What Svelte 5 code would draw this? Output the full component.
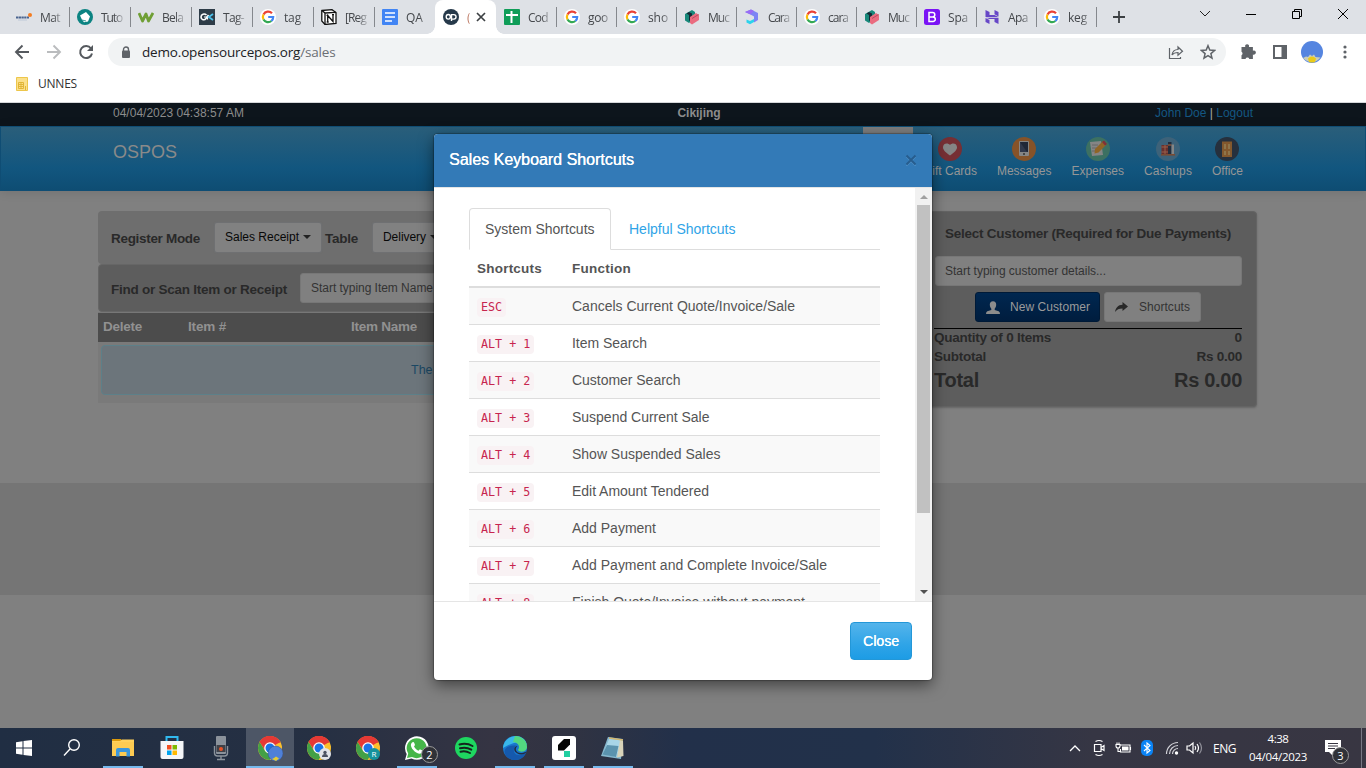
<script>
  const tabs = [
    ['elo', 'Mat'], ['teal', 'Tuto'], ['w', 'Bela'], ['ok', 'Tag-'], ['g', 'tag'], ['notion', '[Reg'], ['doc', 'QA'],
    ['ospos', '('], ['sheet', 'Cod'], ['g', 'goo'], ['g', 'sho'], ['mud', 'Muc'], ['arrow', 'Cara'], ['g', 'cara'],
    ['mud', 'Muc'], ['boot', 'Spa'], ['h', 'Apa'], ['g', 'keg']
  ];
  const labelWidths = [20, 21, 21, 21, 17, 21, 17, 3, 20, 20, 20, 21, 21, 20, 21, 20, 20, 19];
  const nav = [['heart', 'Gift Cards', 54], ['phone', 'Messages', 54.500], ['note', 'Expenses', 52.500], ['books', 'Cashups', 48], ['door', 'Office', 31]];
  const rows = [
    ['ESC', 'Cancels Current Quote/Invoice/Sale', 223],
    ['ALT + 1', 'Item Search', 75],
    ['ALT + 2', 'Customer Search', 108.5],
    ['ALT + 3', 'Suspend Current Sale', 137.5],
    ['ALT + 4', 'Show Suspended Sales', 148.5],
    ['ALT + 5', 'Edit Amount Tendered', 137],
    ['ALT + 6', 'Add Payment', 84],
    ['ALT + 7', 'Add Payment and Complete Invoice/Sale', 255],
    ['ALT + 8', 'Finish Quote/Invoice without payment', 233]
  ];
  const tasks = [
    ['win', ''], ['search', ''], ['folder', 'open'], ['store', ''], ['mic', ''], ['chrome1', 'open active'],
    ['chrome2', ''], ['chrome3', ''], ['whatsapp', 'open'], ['spotify', ''], ['edge', 'open'], ['kapp', 'open'], ['notepad', 'open']
  ];

  // Spreads letters so that a label occupies the given width.
  function fit(node, width) {
    const natural = node.getBoundingClientRect().width;
    const n = node.textContent.length;
    if (width && n) node.style.letterSpacing = (width - natural) / n + 'px';
  }
</script>

{#snippet chromeBall()}
  <circle cx="12" cy="12" r="12" fill="#fbc02d" />
  <path d="M12 12 1.6 6A12 12 0 0 1 22.4 6Z" fill="#e53935" />
  <path d="M12 6.4H22.6A12 12 0 0 0 1.6 6l5.5 8.6Z" fill="#e53935" />
  <path d="M1.6 6A12 12 0 0 0 11.6 24l5.2-9L12 17.4 7.2 15Z" fill="#43a047" />
  <circle cx="12" cy="12" r="5.8" fill="#fff" />
  <circle cx="12" cy="12" r="4.5" fill="#1a73e8" />
{/snippet}

{#snippet fav(kind)}
  <svg class="fav" width="16" height="16" viewBox="0 0 16 16">
    {#if kind === 'elo'}
      <path d="M0 8.500h2.600M3 8.500h2.600M6 8.500h1.800M8.200 8.500h1.800M10.500 8.500h2.500" stroke="#4a648f" stroke-width="2.200" />
      <path d="M2 11h9" stroke="#b8c3d6" stroke-width=".8" /><circle cx="14" cy="6" r="2" fill="#f47b20" />
    {:else if kind === 'teal'}
      <circle cx="8" cy="8" r="8" fill="#0b8382" /><path d="M3 6.500 9 3l4 4.500-2 5-4 .8-2-2.500Z" fill="#fff" /><path d="m5 11 4 1" stroke="#0b8382" stroke-width=".8" />
    {:else if kind === 'w'}
      <path d="m1 4 3.500 8L8 5l2.500 7L15 4" fill="none" stroke="#6f9f35" stroke-width="2.800" stroke-linejoin="round" />
    {:else if kind === 'ok'}
      <rect width="16" height="16" fill="#2e3c48" /><path d="M7.500 6C5.500 4.200 2 5 2 8s3.500 3.700 5 1.500L9.500 6" fill="none" stroke="#fff" stroke-width="1.600" /><path d="M5 8h3.500v2.500" fill="none" stroke="#fff" stroke-width="1.200" /><path d="M14 5 9.800 8l4.200 3" fill="none" stroke="#4cc0ea" stroke-width="1.800" />
    {:else if kind === 'g'}
      <circle cx="8" cy="8" r="8" fill="#fff" />
      <path d="M12 4.300A5.200 5.200 0 0 0 3.500 5.500" fill="none" stroke="#ea4335" stroke-width="2.200" />
      <path d="M3.500 5.500a5.300 5.300 0 0 0 0 5" fill="none" stroke="#fbbc05" stroke-width="2.200" />
      <path d="M3.500 10.500a5.200 5.200 0 0 0 7.900 1.500" fill="none" stroke="#34a853" stroke-width="2.200" />
      <path d="M8.200 8h5a5.300 5.300 0 0 1-1.800 4" fill="none" stroke="#4285f4" stroke-width="2.200" />
    {:else if kind === 'notion'}
      <path d="M.8 1.500 11 .7l4 2.800v11L4 15.500.8 12Z" fill="#fff" stroke="#111" stroke-width="1.300" /><path d="M1 1.500 4 4l11-.7M4 4v11.500" fill="none" stroke="#111" stroke-width="1.300" /><path d="M6.700 13V6.500L12 12.500V5.500M5.500 6.300h2M5.700 13h2M11 5.700h2" fill="none" stroke="#111" stroke-width="1.300" />
    {:else if kind === 'doc'}
      <rect width="16" height="16" rx="1" fill="#4285f4" /><path d="M3 4h10M3 8h10M3 12h7" stroke="#fff" stroke-width="1.700" />
    {:else if kind === 'ospos'}
      <circle cx="8" cy="8" r="8" fill="#26394a" /><ellipse cx="5.300" cy="7.800" rx="2.100" ry="2.300" fill="none" stroke="#fff" stroke-width="1.400" /><path d="M8.500 12V5.600h2.300a2.200 2.200 0 0 1 0 4.500H8.500" fill="none" stroke="#fff" stroke-width="1.400" />
    {:else if kind === 'sheet'}
      <rect width="16" height="16" rx="1" fill="#0f9d58" /><path d="M2 6h12M7.500 2v12" stroke="#fff" stroke-width="2" />
    {:else if kind === 'mud'}
      <path d="m1 5 7-4 3 2v6l-6 5-4-2.500Z" fill="#18897b" /><path d="m5 3 3 1.500V10l-3 2V6L2.500 4.500Z" fill="#172a35" /><path d="m6 8 6-4 3 2v5l-7 4.500L6 14Z" fill="#ea6c80" /><path d="m8 9.500 6.500-4" stroke="#b84a5d" />
    {:else if kind === 'arrow'}
      <path d="m1 3 6-2.500 7 3.500v7l-4 2.500V7.500L6.500 5.500Z" fill="#7d84f4" /><path d="m1 3 6-2.500 3 1.500-3.500 3.500Z" fill="#9a6cf5" /><path d="M2.500 10.500 6 12l4-2v3l-4 2.200-3.500-1.800Z" fill="#2cd2ec" />
    {:else if kind === 'boot'}
      <rect width="16" height="16" rx="2.500" fill="#7a13f5" /><path d="M5 3.500v9h4a2.300 2.300 0 0 0 0-4.600H5h3.600a2.200 2.200 0 0 0 0-4.400Z" fill="none" stroke="#fff" stroke-width="1.500" />
    {:else if kind === 'h'}
      <path d="m1.500 1 4 2v3h5L14.500 8h-13ZM14.500 15l-4-2v-3h-5L2 8.700h12.500Z" fill="#6747c7" /><path d="m10.500 1 4 2v4.500l-4-2.200ZM1.500 9l4 2v4l-4-2Z" fill="#6747c7" />
    {/if}
  </svg>
{/snippet}

<div class="screen">
  <header class="browser">
    <div class="tabs">
      {#each tabs as [kind, label], i}
        <div class="tab" class:early={i < 7} class:active={i === 7} class:nosep={i === 6}>
          {@render fav(kind)}
          <span class="tl"><span use:fit={labelWidths[i]}>{label}</span></span>
          {#if i === 7}
            <svg class="x" width="10" height="10" viewBox="0 0 10 10"><path d="m1 1 8 8M9 1 1 9" stroke="#3c4043" stroke-width="1.700" /></svg>
          {/if}
        </div>
      {/each}
      <svg class="plus" width="12" height="12" viewBox="0 0 12 12"><path d="M6 0v12M0 6h12" stroke="#3c4043" stroke-width="1.800" /></svg>
      <div class="winctl">
        <svg width="12" height="12" viewBox="0 0 12 12"><path d="m1 3 5 5 5-5" fill="none" stroke="#222" /></svg>
        <svg width="12" height="12" viewBox="0 0 12 12"><path d="M1 6.500h10" stroke="#000" /></svg>
        <svg width="12" height="12" viewBox="0 0 12 12"><path d="M1.500 3.500h7v7h-7ZM3.500 3.500v-2h7v7h-2" fill="none" stroke="#000" /></svg>
        <svg width="12" height="12" viewBox="0 0 12 12"><path d="m1 1 10 10M11 1 1 11" stroke="#000" /></svg>
      </div>
    </div>
    <div class="toolbar">
      <svg width="16" height="16" viewBox="0 0 16 16"><path d="M15 8H2M8.500 1.500 2 8l6.500 6.500" fill="none" stroke="#55595e" stroke-width="1.900" /></svg>
      <svg width="16" height="16" viewBox="0 0 16 16"><path d="M1 8h13M7.500 1.500 14 8l-6.500 6.500" fill="none" stroke="#babcbe" stroke-width="1.900" /></svg>
      <svg width="16" height="16" viewBox="0 0 16 16"><path d="M13 4.500A6 6 0 1 0 14 9.500" fill="none" stroke="#55595e" stroke-width="2" /><path d="M15 1v6H9Z" fill="#55595e" /></svg>
      <div class="omni">
        <svg width="10" height="13" viewBox="0 0 10 13"><path d="M2.500 6V3.500a2.500 2.500 0 0 1 5 0V6" fill="none" stroke="#5f6368" stroke-width="1.400" /><rect x="1" y="4.500" width="8" height="7.500" rx="1" fill="#5f6368" /></svg>
        <span class="url"><span use:fit={193.500}>demo.opensourcepos.org<i>/sales</i></span></span>
        <svg class="share" width="16" height="16" viewBox="0 0 16 16"><path d="M1.500 4v10.500h11V13M4 11c.5-3.500 2.500-5.500 6-5.500V3l4.500 4.200-4.500 4V8.500C7.500 8.500 5.500 9 4 11Z" fill="none" stroke="#5f6368" stroke-width="1.200" /></svg>
        <svg width="16" height="16" viewBox="0 0 16 16"><path d="m8 1.700 1.800 4.400 4.700.4-3.600 3.100 1.100 4.600L8 11.700l-4 2.500 1.100-4.600L1.500 6.500l4.700-.4Z" fill="none" stroke="#5f6368" stroke-width="1.500" /></svg>
      </div>
      <svg class="puz" width="16" height="16" viewBox="0 0 16 16"><path d="M1.500 3h3.800a2 2 0 1 1 3.600 0h4v3.700a2.100 2.100 0 1 1 0 3.800V15H9.300a2 2 0 0 0-3.800 0h-4v-3.800a2 2 0 0 0 0-3.500Z" fill="#5f6368" /></svg>
      <svg class="side" width="14" height="14" viewBox="0 0 14 14"><path d="M1 1h12v12H1Z" fill="none" stroke="#5f6368" stroke-width="2" /><path d="M8.500 1H13v12H8.500Z" fill="#5f6368" /></svg>
      <svg class="avatar" width="22" height="22" viewBox="0 0 22 22"><circle cx="11" cy="11" r="11" fill="#5585e0" /><path d="m2 17 3-1.500 2 .5 2-2.500 2 1.500 2-1.500 1.500 2.500 5 .5a11 11 0 0 1-17 1Z" fill="#c9cdb8" /><path d="M7 17.500q4-4 8 0l-1 3.500q-3 1-6 0Z" fill="#eacb19" /></svg>
      <svg class="dots" width="4" height="14" viewBox="0 0 4 14"><g fill="#5f6368"><circle cx="2" cy="2" r="1.600" /><circle cx="2" cy="7" r="1.600" /><circle cx="2" cy="12" r="1.600" /></g></svg>
    </div>
    <div class="bookmarks">
      <svg width="12" height="14" viewBox="0 0 12 14"><path d="M.5.5h11v13H.5Z" fill="#fbe08a" stroke="#edc64b" /><path d="M2.500 5.500h5v6h-5ZM5 5.500v6M2.500 7.500h5M2.500 9.500h5M9.500 9v4" fill="none" stroke="#dfb12f" stroke-width=".9" /></svg>
      <span use:fit={39}>UNNES</span>
    </div>
  </header>

  <main class="page">
    <div class="topbar">
      <span class="clock"><span use:fit={131}>04/04/2023 04:38:57 AM</span></span>
      <b><span use:fit={43}>Cikijing</span></b>
      <span class="user"><span use:fit={98}><a>John Doe</a> <em>|</em> <a>Logout</a></span></span>
    </div>
    <nav class="navbar">
      <span class="brand"><span use:fit={64}>OSPOS</span></span>
      <div class="items">
        <div class="current"></div>
        {#each nav as [kind, label, w]}
          <div class="item">
            <svg width="24" height="24" viewBox="0 0 24 24">
              {#if kind === 'heart'}
                <circle cx="12" cy="12" r="12" fill="#762f34" /><path d="M12 18.500C7 15 4.800 12.500 5 10c.3-4 5-4.500 7-2 2-2.500 6.700-2 7 2 .2 2.500-2 5-7 8.500Z" fill="#858585" />
              {:else if kind === 'phone'}
                <circle cx="12" cy="12" r="12" fill="#865329" /><rect x="7" y="4" width="10" height="15" rx="1" fill="#858585" /><path d="M8 5h8v10H8Z" fill="#202737" /><path d="m8 5 7 10H8Z" fill="#30384b" /><circle cx="12" cy="17" r="1" fill="#333" />
              {:else if kind === 'note'}
                <circle cx="12" cy="12" r="12" fill="#3c7062" /><path d="m4 5 11-1 2 14-11 1Z" fill="#858585" /><path d="M6 8h6M6 11h5M6 14h4" stroke="#666" /><path d="m9 12 8-8 3.500 3.500-8 8-4 1Z" fill="#906526" /><path d="m16 5 2-1.500L21 7l-2 1.500Z" fill="#813037" />
              {:else if kind === 'books'}
                <circle cx="12" cy="12" r="12" fill="#3d6279" /><path d="M5.500 8h7v9h-7Z" fill="#6a2f2c" /><path d="M9 8v9M5.500 10H12M5.500 15H12" stroke="#96604a" /><path d="M12 5h3.500v12H12Z" fill="#222d3d" /><path d="M12 8h3.500" stroke="#83533d" stroke-width="1.500" /><path d="M15.500 7.500H18V17h-2.500Z" fill="#858585" /><path d="M5 17.800h14" stroke="#7d4a30" stroke-width="1.500" />
              {:else}
                <circle cx="12" cy="12" r="12" fill="#26303d" /><path d="M7 4.500h10V20H7Z" fill="#83582d" /><path d="M9 7h2v5H9Zm4 0h2v5h-2ZM9 14h2v4H9Zm4 0h2v4h-2Z" fill="#8f754a" />
              {/if}
            </svg>
            <span><span use:fit={w}>{label}</span></span>
          </div>
        {/each}
      </div>
    </nav>

    <div class="container">
      <section class="register">
        <div class="mode">
          <b class="m1"><span use:fit={89}>Register Mode</span></b>
          <div class="sel s1"><span use:fit={74}>Sales Receipt</span><i></i></div>
          <b class="m2"><span use:fit={33}>Table</span></b>
          <div class="sel s2"><span use:fit={43}>Delivery</span><i></i></div>
        </div>
        <div class="find">
          <b><span use:fit={176}>Find or Scan Item or Receipt</span></b>
          <div class="field"><span use:fit={122}>Start typing Item Name</span></div>
        </div>
        <div class="cols"><b><span use:fit={39}>Delete</span></b><b><span use:fit={38}>Item #</span></b><b><span use:fit={66}>Item Name</span></b></div>
        <div class="cart"><div class="info">The</div></div>
      </section>
      <aside class="sale">
        <b class="who"><span use:fit={286}>Select Customer (Required for Due Payments)</span></b>
        <div class="field"><span use:fit={161}>Start typing customer details...</span></div>
        <div class="btns">
          <div class="new"><svg width="14" height="13" viewBox="0 0 14 13"><path d="M3.800 3.800a3.200 3.500 0 0 1 6.400 0c0 2-1 3-1.500 4V9l4 1.300q1.300.5 1.300 2.700H0q0-2.200 1.300-2.700l4-1.300V7.800C4.800 6.800 3.800 5.800 3.800 3.800Z" fill="#8c8c8c" /></svg><span use:fit={80}>New Customer</span></div>
          <div class="sc"><svg width="13" height="11" viewBox="0 0 13 11"><path d="M7.500 0 13 4.500 7.500 9V6.500C4 6.500 1.800 7.500 0 10c.5-4 3-7.300 7.500-7.300Z" fill="#282828" /></svg><span use:fit={51}>Shortcuts</span></div>
        </div>
        <div class="totals">
          <div><span use:fit={117}>Quantity of 0 Items</span><span>0</span></div>
          <div><span use:fit={52}>Subtotal</span><span use:fit={45.500}>Rs 0.00</span></div>
          <div class="big"><span use:fit={45}>Total</span><span use:fit={68}>Rs 0.00</span></div>
        </div>
      </aside>
    </div>
    <div class="band"></div>

    <div class="modal">
      <div class="mh"><b><span use:fit={185}>Sales Keyboard Shortcuts</span></b><svg width="12" height="12" viewBox="0 0 12 12"><path d="m1.500 2.800 9 9M10.500 2.800l-9 9" stroke="#5392c7" stroke-width="1.300" /><path d="m1.500 1.500 9 9M10.500 1.500l-9 9" stroke="#275d8e" stroke-width="2" /></svg></div>
      <div class="mb">
        <div class="content">
          <div class="mtabs"><div class="on"><span use:fit={109.5}>System Shortcuts</span></div><div><span use:fit={106.500}>Helpful Shortcuts</span></div></div>
          <div class="row head"><b><span use:fit={65}>Shortcuts</span></b><b><span use:fit={59}>Function</span></b></div>
          {#each rows as [key, text, w]}
            <div class="row"><div><code>{key}</code></div><p><span use:fit={w}>{text}</span></p></div>
          {/each}
        </div>
        <div class="scroll"><i class="up"></i><div class="thumb"></div><i class="down"></i></div>
      </div>
      <div class="mf"><div class="close"><span use:fit={36}>Close</span></div></div>
    </div>
  </main>

  <footer class="taskbar">
    {#each tasks as [kind, state]}
      <div class="task {kind} {state}">
        <svg width="26" height="26" viewBox="-1 -1 26 26">
          {#if kind === 'win'}
            <path d="m4 6.200 6.500-1v6.300H4ZM11.500 5 20 4v7.500h-8.500ZM4 12.500h6.500v6.300l-6.500-1ZM11.500 12.500H20V20l-8.500-1Z" fill="#fff" />
          {:else if kind === 'search'}
            <circle cx="14" cy="9" r="5.300" fill="none" stroke="#fff" stroke-width="1.400" /><path d="m10 13-6 6.500" stroke="#fff" stroke-width="1.400" />
          {:else if kind === 'folder'}
            <path d="M1 3h9l1 2H1Z" fill="#dc9a0c" /><path d="M1 5h8l2-1.500h12V20H1Z" fill="#ffd15c" /><path d="M1 6h22v14H1Z" fill="#fdcb52" /><path d="M5 20.500V14q0-2 2-2h10q2 0 2 2v6.500h-3.500V16h-7v4.500Z" fill="#3a96dc" />
          {:else if kind === 'store'}
            <path d="M6.500 6V1h11v5" fill="none" stroke="#31b9ee" stroke-width="2" /><path d="M.5 5h23v16a2 2 0 0 1-2 2h-19a2 2 0 0 1-2-2Z" fill="#f5f6f8" /><path d="M7 9h4.500v4.500H7Z" fill="#f25022" /><path d="M12.500 9H17v4.500h-4.500Z" fill="#7fba00" /><path d="M7 14.500h4.500V19H7Z" fill="#00a4ef" /><path d="M12.500 14.500H17V19h-4.500Z" fill="#ffb900" />
          {:else if kind === 'mic'}
            <rect x="7" y="0" width="10" height="18" rx="1" fill="#8b929b" /><path d="M7.500 9h9v7h-9Z" fill="#3f4148" /><circle cx="12" cy="13" r="2" fill="#e95328" /><path d="M5.500 10v7q0 3 3 3h7q3 0 3-3v-7M12 20v3M8 23.500h8" fill="none" stroke="#8b929b" stroke-width="1.400" />
          {:else if kind.startsWith('chrome')}
            {@render chromeBall()}
            {#if kind === 'chrome1'}<circle cx="17.500" cy="17.500" r="7.500" fill="#4f80d8" stroke="#35538b" stroke-width=".5" /><path d="m14 23 2-1 2-1.500 3 2-3 2.500Z" fill="#e5cb35" />
            {:else if kind === 'chrome2'}<circle cx="18" cy="18" r="6" fill="#e2e4e8" /><circle cx="18" cy="16.500" r="1.700" fill="#4c5261" /><path d="M15 21q0-3 3-3t3 3Z" fill="#4c5261" />
            {:else}<circle cx="18" cy="18" r="6" fill="#16929c" /><text x="18" y="21" font-size="8" text-anchor="middle" fill="#fff">R</text>{/if}
          {:else if kind === 'whatsapp'}
            <path d="m0 24 1.700-6A11.800 11.800 0 1 1 6.500 22.500Z" fill="#fff" /><path d="m2 22 1.200-4.500A10 10 0 1 1 7 21Z" fill="#46b649" /><path d="M7 6.500c1-1 2-.5 2.300.5l.7 2-1 1.500c1 2 2.500 3.300 4.500 4.200l1.400-1.500 2.800 1.500c0 2-1.500 3-3.500 3C10.500 17 5 12 6 8Z" fill="#fff" />
          {:else if kind === 'spotify'}
            <circle cx="12" cy="12" r="11" fill="#1ed760" /><path d="M5.500 8.500q7-2 13 1.500M6 12.300q6-1.700 11.300 1.300M6.500 15.800q5-1.300 9.500 1.200" fill="none" stroke="#14251d" stroke-width="2" stroke-linecap="round" />
          {:else if kind === 'edge'}
            <circle cx="12" cy="12" r="12" fill="#1977cd" /><path d="M0 12C1-3 23-4 24 10q-2-5-9-4T0 12Z" fill="#39b7e9" /><path d="M12 0c6 0 12 4 12 11 0 5-7 6-9 3 3-4-1-8-5-8Z" fill="#53d780" /><path d="M14 10c-4 0-5 8 1 9 3 .6 5.500-.5 8-2A12 12 0 0 1 4 21C-3 13 6 8 14 10Z" fill="#1559ad" /><path d="M14.500 10c-3 2-2 7 3 7 2.500 0 4.500-.7 6-1.500l-1 1.800q-4.500 2.500-8.500 0c-4-2.500-3.500-7 .5-7.300Z" fill="#222b43" />
          {:else if kind === 'kapp'}
            <rect width="24" height="24" rx="3" fill="#fff" /><path d="m6 9 6-6h6v5.500l-6 6H6Z" fill="#050505" /><path d="M12 15h6v6h-6Z" fill="#22cfa0" />
          {:else}
            <path d="m7 1 15 2-2 20-20-3Z" fill="#87b8ce" /><path d="m8 3 12 1-4 17-14-3Z" fill="#a8d5e7" /><path d="m6 9 11.500 1L15 21 1.500 18.500Z" fill="#5b93ae" /><path d="m19 4 3 1 .5 15-6.500 1.500Z" fill="#d8d3ba" /><path d="m8 2 14 2" stroke="#d4b76d" stroke-width="1.500" />
          {/if}
        </svg>
        {#if kind === 'whatsapp'}<span class="badge">2</span>{/if}
      </div>
    {/each}
    <div class="tray">
      <svg width="12" height="8" viewBox="0 0 12 8"><path d="m1 7 5-5 5 5" fill="none" stroke="#fff" stroke-width="1.300" /></svg>
      <svg class="t2" width="12" height="18" viewBox="0 0 12 18"><path d="M1.500 5.500h6.500v7H1.500ZM8 8.500l3-2v5l-3-2M2.500 2.500q3.500-2 7 0M2.500 15.500q3.500 2 7 0" fill="none" stroke="#fff" stroke-width="1.200" /></svg>
      <svg class="t3" width="17" height="12" viewBox="0 0 17 12"><path d="M5.500 3h9.500v7H5.500V7M15.500 5v3M1 2.500h4v1.500q0 2-2 2t-2-2ZM2 .5v2M4 .5v2M3 6v3.500h2" fill="none" stroke="#fff" stroke-width="1.100" /><path d="M7 4.500h6.500v4H7Z" fill="#fff" /></svg>
      <svg class="t4" width="12" height="16" viewBox="0 0 12 16"><rect width="12" height="16" rx="5" fill="#0a83f5" /><path d="m3 5 6 5.500-3 2.500V3l3 2.500L3 11" fill="none" stroke="#fff" stroke-width="1.100" /></svg>
      <svg class="t5" width="14" height="14" viewBox="0 0 14 14"><path d="M1.500 13A11.500 11.500 0 0 1 13 1.500M4.500 13A8.500 8.500 0 0 1 13 4.500M7.500 13A5.500 5.500 0 0 1 13 7.500" fill="none" stroke="#d2d2d8" stroke-width="1.200" /><circle cx="11.500" cy="12" r="1.700" fill="#fff" /></svg>
      <svg class="t6" width="17" height="14" viewBox="0 0 17 14"><path d="M1 5h2.500l3.500-3v10L3.500 9H1ZM9 5q1.500 2 0 4M11 3q3 4 0 8" fill="none" stroke="#fff" stroke-width="1.200" /><path d="M13.500 1.500q4 5.500 0 11" fill="none" stroke="#92929b" stroke-width="1.200" /></svg>
      <span class="lang"><span use:fit={23}>ENG</span></span>
      <div class="time"><span use:fit={21}>4:38</span><span use:fit={58}>04/04/2023</span></div>
      <div class="action">
        <svg width="18" height="17" viewBox="0 0 18 17"><path d="M1 1h16v12h-8v4l-4-4H1Z" fill="#fff" /><path d="M4 4.500h10M4 7h10M4 9.500h7" stroke="#383642" /></svg>
        <span class="badge">3</span>
      </div>
      <div class="peek"></div>
    </div>
  </footer>
</div>

<style>
  :global(body) { margin: 0; overflow: hidden; }
  .screen { width: 1366px; height: 768px; display: flex; flex-direction: column; overflow: hidden; font-family: "Liberation Sans", Arial, sans-serif; }
  .screen :global(*) { box-sizing: border-box; }
  svg { display: block; flex: none; }
  span { white-space: nowrap; }
  .browser { height: 103px; background: #fff; border-bottom: 1px solid #d5d7da; font-family: "Open Sans", "Noto Sans", sans-serif; flex: none; }
  .tabs { height: 34px; background: #dee1e6; display: flex; align-items: center; padding-left: 8px; }
  .tab { width: 60px; height: 34px; display: flex; align-items: center; padding-left: 8px; gap: 8px; position: relative; }
  .tab.early { width: 61px; }
  .tab:not(.nosep):not(.active)::after { content: ""; position: absolute; right: -1px; top: 7px; width: 1px; height: 20px; background: #85888d; }
  .tab.active { background: #fff; width: 61px; border-radius: 8px 8px 0 0; }
  .tab.active::before, .tab.active::after { content: ""; position: absolute; bottom: 0; width: 8px; height: 8px; }
  .tab.active::before { left: -8px; background: radial-gradient(circle at 0 0, #dee1e6 7.500px, #fff 8px); }
  .tab.active::after { right: -8px; background: radial-gradient(circle at 100% 0, #dee1e6 7.500px, #fff 8px); }
  .tl { width: 22px; font-size: 12px; color: #45484c; -webkit-mask-image: linear-gradient(90deg, #000 60%, rgba(0,0,0,.25)); mask-image: linear-gradient(90deg, #000 60%, rgba(0,0,0,.25)); }
  .active .tl { width: 3px; color: #bf7d68; }
  .x { margin-left: -2px; }
  .plus { margin-left: 17px; }
  .winctl { margin-left: auto; display: flex; gap: 34px; padding: 0 17px 6px 0; }
  .toolbar { height: 36px; display: flex; align-items: center; padding-left: 14px; gap: 16px; }
  .omni { width: 1118px; height: 28px; margin-left: -2px; border-radius: 14px; background: #f1f3f4; display: flex; align-items: center; padding: 0 10px 0 13px; }
  .url { margin-left: 11px; flex: 1; font-size: 13.500px; color: #202124; }
  .url i { font-style: normal; color: #6b6f74; }
  .share { margin-right: 16px; }
  .puz { margin-left: -2px; }
  .side { margin-left: 1px; }
  .avatar { margin-left: -2px; }
  .dots { margin-left: 4px; }
  .bookmarks { height: 27px; display: flex; align-items: center; padding-left: 16px; gap: 10px; font-size: 12px; color: #333; }

  .page { height: 625px; flex: none; position: relative; background: #808080; font-size: 13px; }
  .topbar { height: 23px; background: #0d151c; color: #8c8c8c; display: grid; grid-template-columns: 530px 112px 1fr; align-items: center; padding: 0 113px 3px; font-size: 12px; }
  .topbar b { text-align: center; }
  .topbar .user { text-align: right; }
  .topbar a { color: #145782; }
  .topbar em { color: #a9a9a9; font-style: normal; }
  .navbar { height: 65px; border: 1px solid #0f4d74; background: linear-gradient(#2a5e7a, #12567f 65%, #0e4d73); display: flex; justify-content: space-between; box-shadow: 0 1px 10px rgba(0,0,0,.12); }
  .brand { font-size: 18px; color: #8a8a8a; padding: 15px 0 0 112px; }
  .items { display: flex; padding-right: 112px; }
  .current { width: 50px; height: 63px; background: #7c7c7c; }
  .item { padding: 10px 10px 0; display: flex; flex-direction: column; align-items: center; font-size: 12px; color: #969696; }
  .item > span { margin-top: 3px; }
  .container { display: flex; justify-content: space-between; padding: 20px 109px 0 98px; height: 292px; }
  .register { width: 600px; color: #292929; }
  .mode { height: 53px; background: #6e6e6e; border-radius: 4px; display: flex; align-items: center; padding-left: 13px; }
  .mode b, .find b { font-size: 13.500px; }
  .m1 { width: 104px; padding-top: 1px; }
  .sel { height: 29px; background: #818181; display: flex; align-items: center; color: #080808; padding: 0 0 2px 10px; font-size: 12px; border-radius: 2px; box-shadow: 0 0 2px #71767e; }
  .sel i { border: 4px solid transparent; border-top-color: #222; border-bottom: 0; margin-left: 4px; }
  .s1 { width: 106px; }
  .m2 { width: 52px; padding: 1px 0 0 4px; }
  .s2 { width: 82px; }
  .find { height: 48px; background: #5d5d5d; border: 1px solid #666; border-radius: 4px; display: flex; align-items: center; padding: 0 0 0 12px; }
  .find b { width: 189px; padding-top: 3px; }
  .field { height: 30px; background: #808080; border: 1px solid #777; border-radius: 3px; display: flex; align-items: center; padding-left: 10px; color: #333; font-size: 12px; }
  .find .field { width: 300px; }
  .cols { height: 30px; background: #4c4c4c; color: #919191; display: grid; grid-template-columns: 85px 163px 1fr; align-items: center; padding: 0 0 3px 5px; font-size: 13.500px; border-top: 1px solid #777; }
  .cart { height: 61px; background: #7a7a7a; padding: 3px; }
  .info { height: 50px; border: 1px solid #5d8089; border-radius: 4px; background: #6c757b; color: #1b4864; padding: 17px 0 0 309px; font-size: 12.500px; }
  .sale { width: 340px; height: 196px; background: #5d5d5d; border: 1px solid #646464; border-radius: 4px; box-shadow: 0 1px 2px #666; padding: 14px 14px 0 17px; color: #292929; }
  .who { display: block; font-size: 13.500px; padding-left: 10px; height: 30px; line-height: 15px; }
  .sale .field { padding-left: 9px; }
  .btns { display: flex; justify-content: center; gap: 4px; padding: 6px 0 6px; margin-left: -1px; font-size: 12px; }
  .btns > div { display: flex; align-items: center; border-radius: 3px; height: 30px; padding-left: 10px; }
  .new { width: 125px; gap: 10px; background: linear-gradient(#002750, #001d3e); border: 1px solid #001a37; color: #9b9b9b; }
  .sc { width: 97px; gap: 11px; background: #808080; border: 1px solid #777; color: #333; }
  .totals { border-top: 1px solid #000; font-weight: bold; font-size: 13.500px; margin-left: -1px; }
  .totals div { display: flex; justify-content: space-between; height: 19px; line-height: 17px; }
  .totals .big { font-size: 20px; height: 28px; line-height: 26px; }
  .band { height: 112px; background: #757575; }

  .modal { position: absolute; left: 434px; top: 31px; width: 498px; height: 546px; background: #fff; border-radius: 4px; box-shadow: 0 5px 15px rgba(0,0,0,.5), 0 0 1px 1px rgba(0,0,0,.25); display: flex; flex-direction: column; overflow: visible; color: #555; }
  .mh { height: 54px; background: #337ab7; border-bottom: 1px solid #e5e5e5; border-radius: 4px 4px 0 0; color: #fff; display: flex; align-items: center; justify-content: space-between; padding: 0 15px; }
  .mh b { font-size: 16px; font-weight: normal; text-shadow: .3px 0 #fff; padding-bottom: 1px; }
  .mh svg { margin-bottom: 2px; }
  .mb { height: 413px; display: flex; overflow: hidden; }
  .content { width: 481px; padding: 20px 35px 0; }
  .mtabs { display: flex; height: 42px; border-bottom: 1px solid #ddd; font-size: 14px; gap: 2px; }
  .mtabs > div { height: 42px; padding: 12px 15px 0; border: 1px solid transparent; color: #2fa4e7; line-height: 16px; }
  .mtabs .on { width: 142px; border-color: #ddd; border-bottom-color: #fff; border-radius: 4px 4px 0 0; color: #555; background: #fff; }
  .row { display: flex; height: 37px; border-top: 1px solid #ddd; align-items: center; padding-left: 8px; font-size: 14px; }
  .row > :first-child { width: 95px; }
  .row p { margin: 0; }
  .row.head { height: 36px; border-top: 0; font-size: 13.500px; }
  .row.head + .row { border-top-width: 2px; height: 38px; }
  .row:nth-child(odd) { background: #f9f9f9; }
  code { display: inline-block; background: #f9f2f4; color: #c7254e; font: 11.700px/19px "DejaVu Sans Mono", monospace; padding: 0 4px; border-radius: 4px; position: relative; top: 1px; }
  .scroll { width: 17px; background: #f1f1f1; display: flex; flex-direction: column; align-items: center; }
  .scroll i { border: 4px solid transparent; width: 0; height: 0; flex: none; }
  .up { border-bottom-color: #a0a0a0 !important; border-top: 0 !important; margin: 7px 0 6px; }
  .thumb { width: 13px; height: 308px; background: #c1c1c1; }
  .down { border-top-color: #505050 !important; border-bottom: 0 !important; margin-top: auto; margin-bottom: 7px; }
  .mf { height: 79px; border-top: 1px solid #e5e5e5; padding: 20px; display: flex; justify-content: flex-end; }
  .close { width: 62px; height: 38px; border: 1px solid #2397d8; border-radius: 4px; background: linear-gradient(#54b4eb, #2fa4e7 60%, #1d9ce5); color: #fff; font-size: 14px; text-shadow: .3px 0 #fff; line-height: 36px; text-align: center; }

  .taskbar { height: 40px; flex: none; display: flex; padding-left: 1px; background: linear-gradient(90deg, #202e43, #263043 24%, #353443 36%, #303342 42%, #22304a 50%, #22314a 64%, #363644 80%, #383642); font-family: "Open Sans", sans-serif; color: #fff; }
  .task { width: 49px; height: 40px; display: flex; align-items: center; justify-content: center; position: relative; padding-right: 1px; }
  .task.win { padding-right: 4px; }
  .task.search { padding-right: 5px; }
  .task.open::after { content: ""; position: absolute; left: 4px; right: 5px; bottom: 0; height: 2px; background: #76b9ed; }
  .task.active { background: #4d5666; width: 48px; margin-right: 1px; padding-right: 0; }
  .task.active.open::after { left: 0; right: 0; }
  .badge { position: absolute; right: 4px; bottom: 5px; width: 17px; height: 17px; border: 1px solid #999; border-radius: 50%; background: #303238; font-size: 11px; line-height: 15px; text-align: center; }
  .tray { margin-left: auto; display: flex; align-items: center; font-size: 12px; }
  .t2, .t5 { margin-left: 12px; }
  .t3 { margin-left: 10px; }
  .t4 { margin-left: 9px; }
  .t6 { margin-left: 7px; }
  .lang { margin-left: 10px; width: 23px; }
  .time { width: 58px; display: flex; flex-direction: column; align-items: center; line-height: 18px; font-size: 11.500px; margin-left: 13px; }
  .action { width: 36px; height: 40px; padding-top: 11px; position: relative; margin-left: 18px; }
  .action svg { margin-left: -1px; }
  .action .badge { right: 12px; bottom: 4px; }
  .peek { width: 5px; height: 40px; border-left: 1px solid #777783; }
</style>
